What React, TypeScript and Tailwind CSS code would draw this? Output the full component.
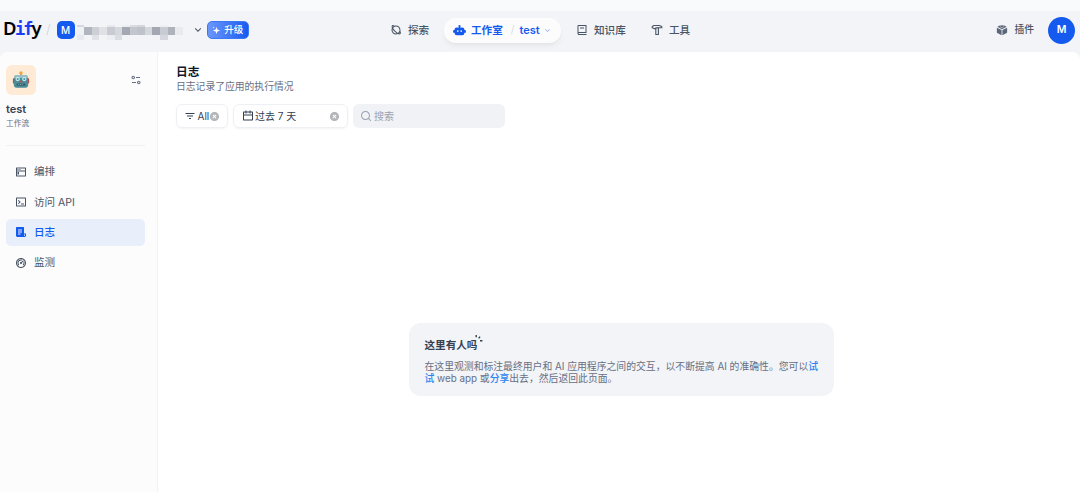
import type { ReactNode } from 'react';
import {
  RiArrowDownSLine,
  RiBook2Line,
  RiCalendarLine,
  RiCloseCircleFill,
  RiDashboard2Line,
  RiEqualizer2Line,
  RiFileList3Fill,
  RiFilter3Line,
  RiPlanetLine,
  RiSearchLine,
  RiTerminalBoxLine,
  RiTerminalWindowLine,
} from 'react-icons/ri';

const SIDE_ITEMS = [
  { id: 'workflow', label: '编排', icon: RiTerminalWindowLine },
  { id: 'api', label: '访问 API', icon: RiTerminalBoxLine },
  { id: 'logs', label: '日志', icon: RiFileList3Fill },
  { id: 'monitor', label: '监测', icon: RiDashboard2Line },
];

// Masked workspace name, three rows of blocks
const MASK_ROWS = [
  { id: 'top', height: 'h-[2px]', cells: ['#d5d9e0', '#f2f4f7', '#f2f4f7', '#f2f4f7', '#e6e8ec', '#f2f4f7', '#eceef1', '#d9dbe0', '#d3d6dc', '#f2f4f7', '#f2f4f7', '#edeff2', '#f2f4f7', '#f2f4f7'] },
  { id: 'mid', height: 'h-[8px]', cells: ['#eff1f4', '#b1b5bd', '#cccfd5', '#dfe1e5', '#c8cbd1', '#d6d8dd', '#a4a8b2', '#c3c6cd', '#bfc2c9', '#d4d7dc', '#a2a7b1', '#c8cbd2', '#afb3bc', '#e8eaed'] },
  { id: 'low', height: 'h-[5px]', cells: ['#e6e9ee', '#f2f4f7', '#dfe2e6', '#f2f4f7', '#eceef1', '#dadde2', '#f2f4f7', '#f2f4f7', '#f2f4f7', '#f2f4f7', '#f2f4f7', '#d4d7dd', '#f2f4f7', '#f2f4f7'] },
];

function MaskedName() {
  return (
    <div className="mt-[4px] ml-[2px] flex flex-col">
      {MASK_ROWS.map((row) => (
        <div key={row.id} className={`flex ${row.height}`}>
          {row.cells.map((color, i) => (
            <span key={i} className="w-[7.6px]" style={{ backgroundColor: color }} />
          ))}
        </div>
      ))}
    </div>
  );
}

function Logo() {
  return (
    <div className="mb-[3px] flex w-[38px] items-baseline font-['Noto_Sans'] text-[18.5px] leading-[22px] font-semibold text-black">
      <span>D</span>
      <span className="-ml-[1.5px] font-['DejaVu_Sans_Mono'] text-[17px] font-bold tracking-[-2px] text-[#1c3cf5]">if</span>
      <span>y</span>
    </div>
  );
}

function RobotFace() {
  return (
    <svg viewBox="0 0 20 20" className="h-[18px] w-[18px]">
      <rect x="1" y="8" width="2.5" height="6" rx="1" fill="#b4494c" />
      <rect x="16.5" y="8" width="2.5" height="6" rx="1" fill="#b4494c" />
      <rect x="9.3" y="2.5" width="1.4" height="3" fill="#6b8f99" />
      <circle cx="10" cy="2.2" r="1.9" fill="#f2a33a" />
      <path d="M5 4.5h10a2.5 2.5 0 0 1 2.4 2.2L18 15a3 3 0 0 1-3 3.6H5A3 3 0 0 1 2 15l.6-8.3A2.5 2.5 0 0 1 5 4.5z" fill="#4d8d98" />
      <path d="M5 4.5h10a2.5 2.5 0 0 1 2.4 2.2v1H2.6v-1A2.5 2.5 0 0 1 5 4.5z" fill="#98bec5" />
      <circle cx="6.3" cy="9" r="2.4" fill="#c8f2f6" />
      <circle cx="13.7" cy="9" r="2.4" fill="#c8f2f6" />
      <circle cx="6.3" cy="9" r="1.2" fill="#4b98a8" />
      <circle cx="13.7" cy="9" r="1.2" fill="#4b98a8" />
      <path d="M10 9.8l1.6 2.8H8.4z" fill="#c34848" />
      <rect x="5" y="13.8" width="10" height="2.6" rx="1" fill="#31606c" />
      <path d="M7 15.1h6" stroke="#8fb8c1" strokeWidth="1" strokeDasharray="1 1" />
    </svg>
  );
}

function StudioIcon() {
  return (
    <svg viewBox="0 0 14 12" className="h-[11px] w-[13px]" fill="currentColor">
      <circle cx="7" cy="1.3" r="1.2" />
      <path d="M6.4 1.5h1.2v2H6.4z" />
      <rect x="0" y="5.5" width="14" height="3" rx="1" />
      <rect x="1.6" y="2.8" width="10.8" height="8.4" rx="2.4" />
      <path d="M4.5 5.6h1.3v2H4.5zM8.2 5.6h1.3v2H8.2z" fill="#fcfcfd" />
    </svg>
  );
}

function HammerIcon() {
  return (
    <svg viewBox="0 0 12 12" className="h-3 w-3" fill="none" stroke="currentColor" strokeWidth="1.1" strokeLinejoin="round">
      <path d="M3 1.5h5.2l2.6.9v1.3H7.4v6.8H4.8V4.6H3L1.2 3.8V2.4z" />
      <path d="M4.8 4.6V3.9h2.6" />
    </svg>
  );
}

function PluginIcon() {
  return (
    <svg viewBox="0 0 14 14" className="h-3 w-3" fill="#5b6678">
      <path d="M1 4.4 6.5 7v6L1.6 10.6A1 1 0 0 1 1 9.7zM13 4.4 7.5 7v6l4.9-2.4a1 1 0 0 0 .6-.9z" />
      <path d="M7 2.4 9 1.5l3.4 1.8L7 6 1.6 3.3 5 1.5z" />
      <path d="M5.2 2.3a1.8 1.1 0 0 1 3.6 0v1a1.8 1 0 0 1-3.6 0z" stroke="#f2f4f7" strokeWidth=".5" />
    </svg>
  );
}

function NavItem({ icon, label, className }: { icon: ReactNode; label: string; className: string }) {
  return (
    <div className={`flex items-center gap-[6px] font-medium text-[#495464] ${className}`}>
      {icon}
      <span className="mt-px">{label}</span>
    </div>
  );
}

function Header() {
  return (
    <header className="flex h-[41px] bg-[#f2f4f7] pb-[3px]">
      <div className="flex w-[390px] items-center pl-[3px]">
        <Logo />
        <span className="ml-[5px] text-[13px] font-light text-[#d0d5dc]">/</span>
        <div className="ml-[6px] flex h-[18px] w-[18px] items-center justify-center rounded-[5px] bg-[#155aef] text-[10px] font-medium text-white">M</div>
        <MaskedName />
        <RiArrowDownSLine className="ml-[9px] h-3 w-3 text-[#495464]" />
        <div className="ml-[3px] flex h-[18px] w-[42px] items-center justify-center gap-[3px] rounded-[5px] border border-[#3b78f5] bg-gradient-to-r from-[#6b96fb] to-[#155aef] text-[9.5px] font-medium text-white">
          <svg viewBox="0 0 10 10" className="h-[9px] w-[9px]" fill="currentColor">
            <path d="M5 1.2 6 4l3 1-3 1-1 3-1-3-3-1 3-1z" />
            <path d="M1.8.5 2.1 1.4 3 1.7l-.9.3-.3.9-.3-.9-.9-.3.9-.3z" />
          </svg>
          <span>升级</span>
        </div>
      </div>
      <nav className="flex items-center text-[10.6px]">
        <NavItem className="w-[54px]" label="探索" icon={<RiPlanetLine className="h-3 w-3" />} />
        <div className="flex h-[25px] w-[117px] items-center rounded-xl bg-[#fcfcfd] pl-[9px] font-semibold text-[#155aef] shadow-md shadow-black/5">
          <StudioIcon />
          <span className="mt-px ml-[5px]">工作室</span>
          <span className="ml-[8px] font-light text-[#d0d5dc]">/</span>
          <span className="ml-[5px] text-[11px]">test</span>
          <RiArrowDownSLine className="ml-[3px] h-[9px] w-[9px] text-[#8cacf5]" />
        </div>
        <NavItem className="ml-[15px] w-[75px]" label="知识库" icon={<RiBook2Line className="h-3 w-3" />} />
        <NavItem className="" label="工具" icon={<HammerIcon />} />
      </nav>
      <div className="ml-auto flex items-center pr-[5px]">
        <NavItem className="text-[9.8px]" label="插件" icon={<PluginIcon />} />
        <div className="ml-[14px] flex h-[27px] w-[27px] items-center justify-center rounded-full bg-[#155aef] text-[10.5px] font-semibold text-white">M</div>
      </div>
    </header>
  );
}

function Sidebar() {
  return (
    <aside className="w-[158px] shrink-0 border-r border-[#f2f3f6] bg-[#fcfcfd] pt-[13px] pr-3 pl-[6px]">
      <div className="flex items-center justify-between pr-[3px]">
        <div className="flex h-[30px] w-[30px] items-center justify-center rounded-md bg-[#ffead5]">
          <RobotFace />
        </div>
        <RiEqualizer2Line className="h-3 w-3 text-[#676f83]" />
      </div>
      <div className="mt-[7px] text-[11px] leading-[15px] font-semibold text-[#354052]">test</div>
      <div className="mt-[1px] text-[7.7px] leading-[12px] text-[#676f83]">工作流</div>
      <div className="mt-[15px] h-px bg-[#f0f1f4]" />
      <ul className="mt-[12px] space-y-[3px]">
        {SIDE_ITEMS.map(({ id, label, icon: Icon }) => {
          const isActive = id === 'logs';
          return (
            <li
              key={id}
              className={`flex h-[27.3px] items-center gap-[7px] rounded-[5px] pl-[9px] text-[10.5px] ${isActive ? 'bg-[#e9eefb] font-medium text-[#155aef]' : 'text-[#495464]'
                }`}
            >
              <Icon className="h-3 w-3" />
              <span className="mt-px">{label}</span>
            </li>
          );
        })}
      </ul>
    </aside>
  );
}

function Filters() {
  return (
    <div className="mt-[10px] flex h-6 text-[10px] text-[#354052]">
      <div className="flex w-[52px] items-center rounded-md border border-[#eef0f3] pl-[7px] shadow-xs">
        <RiFilter3Line className="h-3 w-3 shrink-0" />
        <span className="ml-[1.5px]">All</span>
        <RiCloseCircleFill className="h-[11px] w-[11px] shrink-0 text-[#b5b6b9]" />
      </div>
      <div className="ml-[5px] flex w-[115px] items-center rounded-md border border-[#eef0f3] pr-[7px] pl-2 shadow-xs">
        <RiCalendarLine className="h-3 w-3" />
        <span className="ml-[1px]">过去 7 天</span>
        <RiCloseCircleFill className="ml-auto h-[11px] w-[11px] text-[#b5b6b9]" />
      </div>
      <div className="ml-[5px] flex w-[152px] items-center gap-[2px] rounded-md bg-[#f0f2f6] pl-[7px] text-[#98a2b2]">
        <RiSearchLine className="h-3 w-3" />
        <span>搜索</span>
      </div>
    </div>
  );
}

function EmptyCard() {
  return (
    <div className="mt-[195px] ml-[233px] h-[73px] w-[425px] rounded-xl bg-[#f2f4f7] px-[15.5px] pt-[15px]">
      <div className="flex text-[10.6px] leading-4 font-semibold text-[#354052]">
        <span>这里有人吗</span>
        <svg viewBox="0 0 8 8" className="-mt-[4px] -ml-[2px] h-2 w-2" fill="none" stroke="#354052" strokeWidth="1.4">
          <path d="M1.2 1v2.2M5 2.6 3.7 4.4M5 6.7h2.4" />
        </svg>
      </div>
      <p className="mt-[6px] text-[9.83px] leading-[12px] whitespace-nowrap text-[#676f83]">
        在这里观测和标注最终用户和 AI 应用程序之间的交互，以不断提高 AI 的准确性。您可以<span className="font-medium text-[#2b84f0]">试</span>
        <br />
        <span className="font-medium text-[#2b84f0]">试</span> web app 或<span className="font-medium text-[#2b84f0]">分享</span>出去，然后返回此页面。
      </p>
    </div>
  );
}

export default function App() {
  return (
    <div lang="zh-CN" className="h-[492px] w-[1080px] overflow-hidden bg-[#f9fafb] pt-[11px] font-['Inter','Noto_Sans_CJK_SC',sans-serif]">
      <Header />
      <div className="bg-[#f2f4f7]">
        <div className="flex h-[440px] overflow-hidden rounded-t-lg bg-white">
          <Sidebar />
          <main className="flex-1 pt-[12px] pl-[18px]">
            <h1 className="text-[11.7px] leading-4 font-semibold text-[#101828]">日志</h1>
            <p className="text-[9.8px] leading-[14px] text-[#676f83]">日志记录了应用的执行情况</p>
            <Filters />
            <EmptyCard />
          </main>
        </div>
      </div>
    </div>
  );
}
